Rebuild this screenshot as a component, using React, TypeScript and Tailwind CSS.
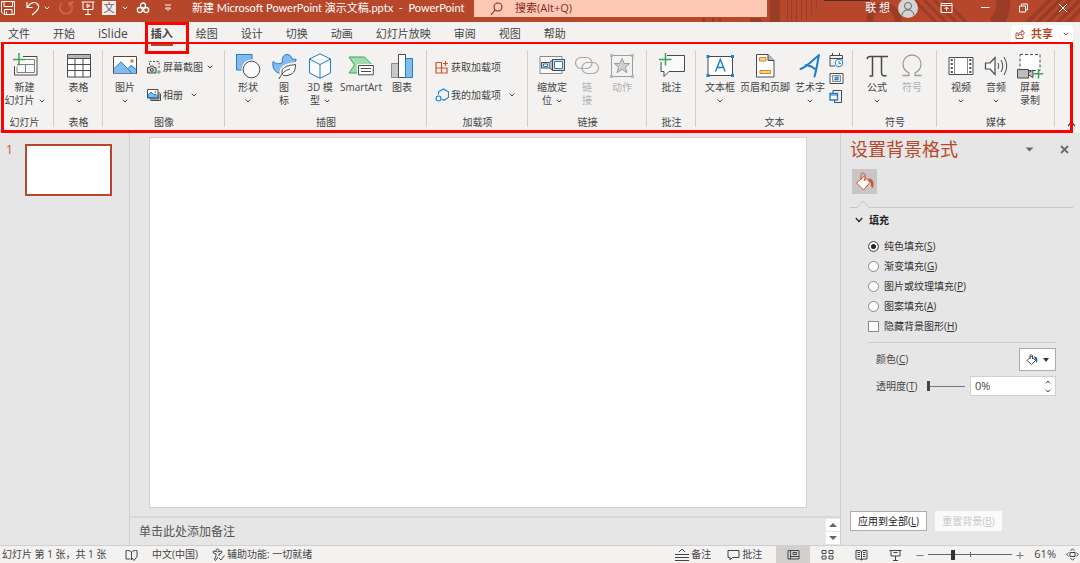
import type { ReactNode } from "react";

const INK = "#4a4a4a";
const BLUE = "#1e7fcb";
const SKY = "#83bbec";

type IconProps = { w: number; h: number; box?: string; children: ReactNode; className?: string };

function Icon({ w, h, box, children, className = "" }: IconProps) {
  return (
    <svg
      width={w}
      height={h}
      viewBox={box ?? `0 0 ${w} ${h}`}
      fill="none"
      stroke="currentColor"
      strokeWidth="1"
      aria-hidden="true"
      className={`shrink-0 ${className}`}
    >
      {children}
    </svg>
  );
}

function Chevron() {
  return (
    <Icon w={6} h={4}>
      <path d="M.8.7 3 3 5.2.7" />
    </Icon>
  );
}

const icons = {
  newSlide: (
    <Icon w={26} h={26}>
      <path d="M11 3.500h14v18.500h-22.500V13" fill="#fafafa" stroke={INK} />
      <path d="M11 6.500h11.500v13h-17.500v-6M5 11.500h17.500M13.500 11.500v8" stroke="#808080" />
      <path d="M7 0v12.500M1 6.500h12" stroke="#3aa655" strokeWidth="1.500" />
    </Icon>
  ),
  table: (
    <Icon w={26} h={26}>
      <path d="M1.500 1.500h23v22.500h-23z" fill="#fff" stroke={INK} />
      <path d="M2 2h22v3.500H2z" fill="#b5b5b5" stroke="none" />
      <path d="M1.500 5.500h23M1.500 11.500h23M1.500 17.500h23M9 5.500V24M17 5.500V24" stroke={INK} />
    </Icon>
  ),
  picture: (
    <Icon w={26} h={26}>
      <path d="M1.500 3.500h23v17h-23z" fill="#fff" stroke={INK} />
      <path d="M2 16l7-7 7 7 2-2.500 2-1.500 4 4v4.500H2z" fill={SKY} stroke="none" />
      <path d="M2 15.500 9 8.800l11 11.500M15.500 15.500l3.500-3 5.500 4.500" stroke={BLUE} />
      <circle cx="20" cy="8" r="1.800" fill="#e07b2a" stroke="none" />
    </Icon>
  ),
  shapes: (
    <Icon w={26} h={26}>
      <path d="M1.500 1.500h15.500v15.500h-15.500z" fill={SKY} stroke={BLUE} />
      <circle cx="16.500" cy="16.500" r="10" fill="#f3f2f1" stroke="none" />
      <circle cx="16.500" cy="16.500" r="8.300" fill="#fafafa" stroke={INK} />
    </Icon>
  ),
  duck: (
    <Icon w={26} h={26}>
      <path
        d="M2 8.500c3 2.500 6 2.800 9.500 1C10.500 5 12.500 1.500 16 1.500c2.700 0 4.300 1.700 5 4.300 1.500.7 3 .4 4.200.4-.4 3-2.700 4.300-5.200 4.300-1 6-3.500 11-10 10C4 20 1 15 2 8.500z"
        fill={SKY}
        stroke={BLUE}
      />
      <path d="M25 10.500c-7 1-14 2-15 8-.3 2.200.5 4 2 5 6 .8 13-2 13-13z" fill="#fff" stroke="#f3f2f1" strokeWidth="3" />
      <path d="M24.500 11.500c-7 1-13 2-13.500 7-.2 1.800.3 3 1.500 4 6 .8 12.500-2 12-11zM8 26c2.500-5.500 6-8.500 11-10" fill="#fff" stroke={INK} />
    </Icon>
  ),
  cube: (
    <Icon w={26} h={26}>
      <path d="M13 .8 23.500 6v14L13 25.300 2.500 20V6z" fill="#fafafa" stroke={BLUE} />
      <path d="M2.500 6 13 11.500 23.500 6M13 11.500v13.500" stroke={BLUE} />
    </Icon>
  ),
  smartArt: (
    <Icon w={26} h={26}>
      <path d="M1 4h15.500l6.500 6.500-9 9.500H1l5.500-8z" fill="#9fdcac" stroke="#3aa655" />
      <path d="M9 11h17v12H9z" fill="#f3f2f1" stroke="none" />
      <path d="M10.500 12.500h14.800v9.300H10.500z" fill="#fff" stroke={INK} />
      <path d="M13 15.500h10M13 18.500h10" stroke={INK} />
    </Icon>
  ),
  chart: (
    <Icon w={26} h={26}>
      <path d="M2.500 10.500h7v14h-7z" fill="#c8c8c8" stroke="#8a8a8a" />
      <path d="M9.500 1.500h7v23h-7z" fill="#fff" stroke={INK} />
      <path d="M16.500 5.500h7v19h-7z" fill={SKY} stroke={BLUE} />
    </Icon>
  ),
  zoomLink: (
    <Icon w={26} h={26}>
      <path d="M1 3.500h22v17H1z" fill="#fafafa" stroke="#8a8a8a" />
      <path d="M2.500 9.500h8v5.500h-8z" fill="#d8d8d8" stroke={INK} />
      <path d="M4.500 11h4v2.500h-4z" fill="#fff" stroke={BLUE} />
      <path d="M10.500 9.500 14 6.500v11L10.500 15" fill="#bbb" stroke={INK} />
      <path d="M13.500 6.500h12v11h-12z" fill="#d8d8d8" stroke={INK} />
      <path d="M15.500 8.500h8v7h-8z" fill="#fff" stroke={BLUE} />
    </Icon>
  ),
  link: (
    <Icon w={26} h={26} className="text-[#a8a8a8]">
      <rect x="1.500" y="4.500" width="16.500" height="11" rx="5.500" strokeWidth="1.200" />
      <rect x="8" y="9.500" width="16.500" height="11" rx="5.500" strokeWidth="1.200" />
    </Icon>
  ),
  action: (
    <Icon w={26} h={26} className="text-[#9c9c9c]">
      <path d="M2.500 2.500h21v21h-21z" />
      <path d="m13 5.500 2.200 5h5.500l-4.400 3.600 1.700 5.600-5-3.300-5 3.300 1.700-5.600-4.400-3.600h5.500z" fill="#d0d0d0" />
      <path d="M1 1h3v3H1zM22 1h3v3h-3zM1 22h3v3H1zM22 22h3v3h-3z" fill="#b8b8b8" stroke="none" />
    </Icon>
  ),
  comment: (
    <Icon w={26} h={26}>
      <path d="M8 2.500h17.500v16H10l-5 5v-5H2V9" fill="#fafafa" stroke={INK} />
      <path d="M6.500 0v12.500M0 6.500h12.500" stroke="#3aa655" strokeWidth="1.500" />
    </Icon>
  ),
  textBox: (
    <Icon w={28} h={26}>
      <path d="M2 3.500h24.500v19H2z" fill="#fff" stroke={INK} />
      <path d="m9.500 18.500 4.800-12 4.800 12M11 14.500h6.500" stroke={BLUE} strokeWidth="1.400" />
      <path d="M.5 2h3v3h-3zM25 2h3v3h-3zM.5 21h3v3h-3zM25 21h3v3h-3z" fill={BLUE} stroke="none" />
    </Icon>
  ),
  headerFooter: (
    <Icon w={26} h={26}>
      <path d="M4.500 1.500h11.500l6 6v16.500h-17.500z" fill="#fff" stroke={INK} />
      <path d="M16 1.500v6h6" fill="#bbb" stroke={INK} />
      <path d="M7.500 4.500h6.500v3.500H7.500zM8 17.500h10.500v3H8z" fill="#f9cf95" stroke="#dd8420" />
    </Icon>
  ),
  wordArt: (
    <Icon w={26} h={26}>
      <path d="M3.500 16C10 14 16 7 22 2 20.500 8 20 15.500 17.500 23.500M9 12c3.500.5 7 2 10 4.500" stroke={BLUE} strokeWidth="2" strokeLinecap="round" strokeLinejoin="round" />
    </Icon>
  ),
  pi: (
    <Icon w={26} h={26}>
      <path d="M3 6c.5-2 1.500-2.500 3-2.500h18M8.500 3.500V23H5.500M17.500 3.500v16c0 3 2 4 5 3" stroke={INK} strokeWidth="1.500" />
    </Icon>
  ),
  omega: (
    <Icon w={26} h={26} className="text-[#9c9c9c]">
      <path d="M3.500 22.500h6.500v-2.500C6 18 4 14.500 4 11a9 9 0 0 1 18 0c0 3.500-2 7-6 9v2.500h6.500" strokeWidth="1.300" />
    </Icon>
  ),
  video: (
    <Icon w={26} h={26}>
      <path d="M1 4.500h24v17H1z" fill="#fff" stroke={INK} />
      <path d="M6.500 4.500v17M19.500 4.500v17" stroke="#8a8a8a" />
      <path d="M3.800 6v15M22.300 6v15" stroke={INK} strokeWidth="2" strokeDasharray="2 2" />
    </Icon>
  ),
  audio: (
    <Icon w={26} h={26}>
      <path d="M2.500 10h4.500l5-5.500v17l-5-5.500H2.500z" fill="#fafafa" stroke={INK} strokeWidth="1.200" />
      <path d="M15 10q1.500 3 0 6M18 7q3.500 6 0 12M21 4q5.500 9 0 18" stroke={INK} />
    </Icon>
  ),
  screenRecord: (
    <Icon w={28} h={26}>
      <path d="M4 1.500h20v16H4z" fill="#fff" stroke={INK} strokeDasharray="3 2" />
      <path d="M1.500 16.500h11v8.500h-11zM12.500 19.500l4.500-2.500v7.500l-4.500-2.500z" fill="#bdbdbd" stroke={INK} />
      <path d="M22.500 16v9.500M17.800 20.700h9.500" stroke="#3aa655" strokeWidth="1.500" />
    </Icon>
  ),
};

type ToolProps = { icon: ReactNode; lines: string[]; width: string; menu?: boolean; off?: boolean };

function Tool({ icon, lines, width, menu, off }: ToolProps) {
  return (
    <button
      type="button"
      disabled={off}
      className={`flex shrink-0 flex-col items-center whitespace-nowrap leading-[13px] ${width} ${off ? "text-[#b0b0b0]" : ""}`}
    >
      <span className="mb-0.5 flex h-[26px] items-start">{icon}</span>
      <span>{lines[0]}</span>
      <span className="flex h-[13px] items-center justify-center gap-1">
        {lines[1]}
        {menu && <Chevron />}
      </span>
    </button>
  );
}

function RowTool({ icon, label, menu, wide }: { icon: ReactNode; label: string; menu?: boolean; wide?: boolean }) {
  return (
    <button type="button" className="flex h-7 items-center gap-0.5 whitespace-nowrap">
      {icon}
      <span className={wide ? "mr-1.5" : "mr-0.5"}>{label}</span>
      {menu && <Chevron />}
    </button>
  );
}

function Group({ label, className, children }: { label: string; className: string; children: ReactNode }) {
  return (
    <section
      aria-label={label}
      className={`relative flex shrink-0 flex-col justify-between after:absolute after:bottom-1.5 after:right-0 after:top-2 after:w-px after:bg-[#d2d0ce] ${className}`}
    >
      <div className="flex pt-[11px]">{children}</div>
      <h2 className="pb-1 text-center leading-[14px]">{label}</h2>
    </section>
  );
}

function Ribbon() {
  return (
    <div className="relative z-10 flex h-[91px] shrink-0 bg-[#f3f2f1] text-[10px] text-[#444]">
      <Group label="幻灯片" className="w-[54px] pr-[5px]">
        <Tool icon={icons.newSlide} lines={["新建", "幻灯片"]} width="w-full" menu />
      </Group>
      <Group label="表格" className="w-[49px]">
        <Tool icon={icons.table} lines={["表格"]} width="w-full" menu />
      </Group>
      <Group label="图像" className="w-[122px]">
        <Tool icon={icons.picture} lines={["图片"]} width="w-11" menu />
        <div className="flex flex-col">
          <RowTool
            label="屏幕截图"
            menu
            icon={
              <Icon w={14} h={14}>
                <path d="M2.500 5V1.500h9.500v8" stroke={INK} strokeDasharray="2 1.500" />
                <path d="M.5 7.500h2l1-1.500h2.500l1 1.500h2v5.500H.5z" fill="#ccc" stroke={INK} />
                <circle cx="4.800" cy="10" r="1.500" stroke={INK} />
                <path d="M12 10v4M10 12h4" stroke="#3aa655" />
              </Icon>
            }
          />
          <RowTool
            label="相册"
            menu
            wide
            icon={
              <Icon w={14} h={14}>
                <path d="M3.500 12.500h10v-7" stroke={INK} />
                <path d="M2.500 11h9.500V4" stroke={INK} />
                <path d="M.5 1.500h10.500v8.500H.5z" fill="#fff" stroke={INK} />
                <path d="M1 7l3-3 3 3 1.500-1L10.500 8v1.500H1z" fill={SKY} stroke={BLUE} />
                <circle cx="8.500" cy="3.800" r="1" fill="#e07b2a" stroke="none" />
              </Icon>
            }
          />
        </div>
      </Group>
      <Group label="插图" className="w-[202px] px-[5px]">
        <Tool icon={icons.shapes} lines={["形状"]} width="w-9" menu />
        <Tool icon={icons.duck} lines={["图", "标"]} width="w-9" />
        <Tool icon={icons.cube} lines={["3D 模", "型"]} width="w-9" menu />
        <Tool icon={icons.smartArt} lines={["SmartArt"]} width="w-[46px]" />
        <Tool icon={icons.chart} lines={["图表"]} width="w-9" />
      </Group>
      <Group label="加载项" className="w-[101px]">
        <div className="flex flex-col pl-2">
          <RowTool
            label="获取加载项"
            icon={
              <Icon w={14} h={14} className="text-[#d1502b]">
                <path d="M1 2.500h5.500v5.500M1 2.500V13h11V8H1M6.500 8v5" strokeWidth="1.200" />
                <path d="M10.500 1v5M8 3.500h5" strokeWidth="1.200" />
              </Icon>
            }
          />
          <RowTool
            label="我的加载项"
            menu
            wide
            icon={
              <Icon w={14} h={14} className="text-[#1e7fcb]">
                <path d="M3.500 6.500V3.800L8.500 1l5 2.800v5.700L9 12.300l-2-1" strokeWidth="1.100" />
                <circle cx="3.500" cy="10.500" r="2.500" strokeWidth="1.100" />
              </Icon>
            }
          />
        </div>
      </Group>
      <Group label="链接" className="w-[119px] px-[5px]">
        <Tool icon={icons.zoomLink} lines={["缩放定", "位"]} width="w-[38px]" menu />
        <Tool icon={icons.link} lines={["链", "接"]} width="w-8" off />
        <Tool icon={icons.action} lines={["动作"]} width="w-[38px]" off />
      </Group>
      <Group label="批注" className="w-[49px]">
        <Tool icon={icons.comment} lines={["批注"]} width="w-full" />
      </Group>
      <Group label="文本" className="w-[157px] px-[5px]">
        <Tool icon={icons.textBox} lines={["文本框"]} width="w-[38px]" menu />
        <Tool icon={icons.headerFooter} lines={["页眉和页脚"]} width="w-[52px]" />
        <Tool icon={icons.wordArt} lines={["艺术字"]} width="w-[38px]" menu />
        <div className="flex flex-col gap-[3px]">
          <button type="button" aria-label="日期和时间">
            <Icon w={15} h={15}>
              <path d="M1 2.500h12.500v4M1 2.500v10.500h5M1 5.500h12.500M3.500 0v3M10.500 0v3" stroke={INK} />
              <circle cx="10" cy="10" r="3.800" fill="#fff" stroke={BLUE} />
              <path d="M10 8v2.500h2" stroke={BLUE} />
            </Icon>
          </button>
          <button type="button" aria-label="幻灯片编号">
            <Icon w={15} h={15}>
              <path d="M1 2.500h13v10H1z" fill="#fff" stroke={INK} />
              <path d="M3.500 4.500h8v6h-8z" fill="#e3e3e3" stroke="#888" />
              <path d="M7 5.500 6.500 9.500M9 5.500l-.5 4M5.700 6.700h4M5.400 8.400h4" stroke={BLUE} />
            </Icon>
          </button>
          <button type="button" aria-label="对象">
            <Icon w={15} h={15}>
              <path d="M4 4V1.500h8.500v12H5.500v-2.500" stroke={INK} />
              <path d="M1 4.500h7.500v6.500H1z" fill="#fff" stroke={BLUE} strokeWidth="1.400" />
              <path d="M1 6h7.500" stroke={BLUE} />
            </Icon>
          </button>
        </div>
      </Group>
      <Group label="符号" className="w-[84px] px-1.5">
        <Tool icon={icons.pi} lines={["公式"]} width="w-9" menu />
        <Tool icon={icons.omega} lines={["符号"]} width="w-[34px]" off />
      </Group>
      <Group label="媒体" className="w-[118px] px-1.5">
        <Tool icon={icons.video} lines={["视频"]} width="w-9" menu />
        <Tool icon={icons.audio} lines={["音频"]} width="w-[34px]" menu />
        <Tool icon={icons.screenRecord} lines={["屏幕", "录制"]} width="w-[34px]" />
      </Group>
      <button type="button" aria-label="折叠功能区" className="ml-auto flex items-end pb-1.5 pr-1">
        <Icon w={9} h={6}>
          <path d="M1 5l3.500-4L8 5" stroke={INK} strokeWidth="1.200" />
        </Icon>
      </button>
      <div className="pointer-events-none absolute -top-px bottom-0 left-px right-[7px] border-[3px] border-[#fe0000]" />
    </div>
  );
}

function TitleBar() {
  return (
    <header className="relative flex h-[22px] shrink-0 items-start overflow-hidden bg-[#b7472a] text-[11px] text-white">
      <svg className="absolute right-0 top-0" width="560" height="22" viewBox="520 0 560 22" fill="none" stroke="#9a3d27" aria-hidden="true">
        <path d="M702 18h3v4h-3zM712 18h2v4h-2zM719 18h2v4h-2zM750 18h11v4h-11zM770 0h10v22h-10zM787 0h1v22h-1z" fill="#9a3d27" stroke="none" />
        <path d="M791.500 0v22M796.500 0v22M801.500 0v22M806.500 0v20M811.500 0v15M816.500 0v9" />
        <circle cx="884" cy="20" r="14" strokeWidth="7" />
        <path d="M914 0l22 22M924 0l22 22M934 0l22 22M944 0l22 22" strokeWidth="3" />
        <path d="M1003-2q2 14-8 26" strokeWidth="14" />
        <path d="M1026 24l26-26M1036 24l26-26M1046 24l26-26M1056 24l26-26M1066 24l26-26" strokeWidth="4" />
        <path d="M824 0h46v1h-46z" fill="#4a2b20" stroke="none" />
      </svg>
      <div className="relative flex h-4 shrink-0 items-center">
        <button type="button" aria-label="保存">
          <Icon w={16} h={16}>
            <path d="M1.500 1.500h13v13H4l-2.500-2.500zM4 1.500v5h8.500v-5M4.500 14.500v-5H12v5M6.500 14v-2.500" />
          </Icon>
        </button>
        <button type="button" aria-label="撤消" className="ml-2.5 flex items-center gap-1">
          <Icon w={14} h={16}>
            <path d="M1 2v5.500h5.500M1.500 7C5 2 9 1.500 11.500 4c3 3.500 0 6.500-5.500 11" strokeWidth="1.200" />
          </Icon>
          <Chevron />
        </button>
        <button type="button" aria-label="恢复" disabled className="ml-2 text-[#d9694a]">
          <Icon w={16} h={16}>
            <path d="M4.500 2.500a6.200 6.200 0 1 0 7 0M11.500 6.500v-4h4" strokeWidth="1.400" />
          </Icon>
        </button>
        <button type="button" aria-label="从头开始" className="ml-1.5">
          <Icon w={16} h={16}>
            <path d="M1.500 2h13M3 2v7.500h10V2M8 9.500v5M5 14.500h6M7 4v3.500l3-1.800z" />
          </Icon>
        </button>
        <button type="button" aria-label="翻译" className="ml-1.5 flex items-center gap-1.5">
          <span className="flex size-3.5 items-center justify-center bg-[#f7ebe8] text-[11px] leading-[14px] text-[#5a6470]">文</span>
          <Chevron />
        </button>
        <button type="button" aria-label="查找" className="ml-2">
          <Icon w={14} h={14}>
            <circle cx="7" cy="4.500" r="2.500" strokeWidth="1.300" />
            <circle cx="3.800" cy="9" r="2.500" strokeWidth="1.300" />
            <circle cx="10.200" cy="9" r="2.500" strokeWidth="1.300" />
          </Icon>
        </button>
        <button type="button" aria-label="自定义快速访问工具栏" className="ml-3.5">
          <Icon w={8} h={8}>
            <path d="M1 1h6M1.500 4h5L4 6.500z" />
          </Icon>
        </button>
      </div>
      <h1 className="relative ml-5 w-[282px] shrink-0 whitespace-nowrap font-['Lato','Noto_Sans_CJK_SC',sans-serif] leading-4">
        新建 Microsoft PowerPoint 演示文稿.pptx&nbsp; -&nbsp; PowerPoint
      </h1>
      <label className="relative flex h-[17px] w-[293px] items-center gap-3 bg-[#fdc9b5] pl-4 text-[#7f2a1e]">
        <Icon w={13} h={14}>
          <circle cx="8" cy="5" r="4" strokeWidth="1.100" />
          <path d="M5 8 1 13" strokeWidth="1.200" />
        </Icon>
        <input aria-label="搜索" placeholder="搜索(Alt+Q)" className="w-full min-w-0 bg-transparent outline-none placeholder:text-[#7f2a1e]" />
      </label>
      <div className="relative ml-auto flex h-4 shrink-0 items-center">
        <span className="mr-2">联 想</span>
        <span className="mr-[22px] flex size-5 items-center justify-center rounded-full bg-[#d4d4d4] text-[#666]">
          <Icon w={16} h={16}>
            <circle cx="8" cy="6" r="3.500" />
            <path d="M2 15.500c0-7.500 12-7.500 12 0" />
          </Icon>
        </span>
        <button type="button" aria-label="功能区显示选项" className="mr-[27px]">
          <Icon w={13} h={12}>
            <path d="M1 1.500h11v9H1zM1 3.500h11M6.500 9V5.500M4.500 7l2-2 2 2" />
          </Icon>
        </button>
        <button type="button" aria-label="最小化" className="mr-7">
          <Icon w={10} h={10}>
            <path d="M1 4.500h8.500" />
          </Icon>
        </button>
        <button type="button" aria-label="还原" className="mr-[29px]">
          <Icon w={11} h={10}>
            <path d="M1.500 3h6v6h-6zM3.500 3V1h6v6h-2" />
          </Icon>
        </button>
        <button type="button" aria-label="关闭" className="mr-3">
          <Icon w={10} h={10}>
            <path d="m1 1 8 8M9 1 1 9" />
          </Icon>
        </button>
      </div>
    </header>
  );
}

const tabs = ["文件", "开始", "iSlide", "插入", "绘图", "设计", "切换", "动画", "幻灯片放映", "审阅", "视图", "帮助"];

function TabRow() {
  return (
    <nav className="relative z-20 flex h-5 shrink-0 items-center gap-[23px] bg-[#f3f2f1] pl-2 pt-1 text-[11px] leading-4 text-[#444]">
      {tabs.map((tab) =>
        tab === "插入" ? (
          <button key={tab} type="button" className="relative whitespace-nowrap font-bold">
            {tab}
            <span className="absolute -bottom-1 left-0 h-0.5 w-full bg-[#b7472a]" />
            <span className="pointer-events-none absolute -left-1.5 -right-4 -top-1 h-8 border-[3px] border-[#fe0000]" />
          </button>
        ) : (
          <button key={tab} type="button" className={`whitespace-nowrap ${tab === "iSlide" ? "text-[12px]" : ""}`}>
            {tab}
          </button>
        ),
      )}
      <button type="button" className="ml-auto mr-[7px] flex h-[17px] items-center gap-1.5 self-end rounded-t-sm bg-white px-1 font-bold text-[#b7472a]">
        <Icon w={10} h={10}>
          <path d="M3 4H1v5.500h7V7M3 7c0-3 1.500-4 4-4V1l2.500 3L7 6.500V5C5 5 4 5.500 3 7z" />
        </Icon>
        <span className="mr-1">共享</span>
        <Chevron />
      </button>
    </nav>
  );
}

const fills: [string, string][] = [
  ["纯色填充", "S"],
  ["渐变填充", "G"],
  ["图片或纹理填充", "P"],
  ["图案填充", "A"],
];

function Key({ text, k }: { text: string; k: string }) {
  return (
    <span className="whitespace-nowrap">
      {text}(<u className="underline-offset-1">{k}</u>)
    </span>
  );
}

function FormatPane() {
  return (
    <aside className="flex w-60 shrink-0 flex-col border-l border-[#cfcfcf] pl-[9px] text-[10px] text-[#333]">
      <div className="flex h-8 items-center text-[#b7472a]">
        <h2 className="text-[18px] leading-6">设置背景格式</h2>
        <button type="button" aria-label="任务窗格选项" className="ml-auto mr-[26px] text-[#6b6b6b]">
          <Icon w={9} h={5}>
            <path d="M.5.5h8l-4 4z" fill="currentColor" stroke="none" />
          </Icon>
        </button>
        <button type="button" aria-label="关闭窗格" className="mr-[11px] text-[#6b6b6b]">
          <Icon w={9} h={9}>
            <path d="m1 1 7 7M8 1 1 8" strokeWidth="1.800" />
          </Icon>
        </button>
      </div>
      <button type="button" aria-label="填充选项卡" className="ml-0.5 mt-1 flex size-[25px] items-center justify-center bg-[#c6c6c6]">
        <Icon w={20} h={20}>
          <path d="M1.500 11 9 4.500l6 6-6.500 7.500z" fill="#fff" stroke="#d1502b" />
          <path d="M6 8V3c0-2.500 4-2.500 4 0v5" stroke="#d1502b" />
          <circle cx="9.500" cy="8" r="1" fill="#d1502b" stroke="none" />
          <path d="M12.500 6.500c5-.5 7 3 5.500 9.500-1.500-.5-2.500-2-2-5z" fill="#d1502b" stroke="none" />
        </Icon>
      </button>
      <div className="mr-[7px] mt-1.5 flex items-end text-[#c6c6c6]">
        <span className="h-px w-[7px] bg-[#c6c6c6]" />
        <Icon w={12} h={8}>
          <path d="M0 7.500 6 1l6 6.500" />
        </Icon>
        <span className="h-px flex-1 bg-[#c6c6c6]" />
      </div>
      <button type="button" className="mt-0.5 flex h-5 items-center gap-1.5 pl-[5px] font-bold text-[#222]">
        <Icon w={8} h={6}>
          <path d="m.8 1 3.200 3.500L7.200 1" strokeWidth="1.200" />
        </Icon>
        填充
      </button>
      <fieldset className="mt-1.5 pl-[18px]">
        {fills.map(([text, k], i) => (
          <label key={k} className="flex h-5 items-center gap-[5px]">
            <input
              type="radio"
              name="fill"
              defaultChecked={i === 0}
              className="size-[11px] appearance-none rounded-full border border-[#888] bg-white checked:border-[#666] checked:bg-[#222] checked:shadow-[inset_0_0_0_2px_#fff]"
            />
            <Key text={text} k={k} />
          </label>
        ))}
        <label className="flex h-5 items-center gap-[5px]">
          <input type="checkbox" className="size-[11px] appearance-none border border-[#888] bg-white checked:bg-[#444]" />
          <Key text="隐藏背景图形" k="H" />
        </label>
      </fieldset>
      <div className="ml-[18px] mr-6 mt-1.5 border-t border-[#cbcbcb] pl-2 pt-[5px] text-[#444]">
        <div className="flex h-[23px] items-center justify-between">
          <Key text="颜色" k="C" />
          <button type="button" aria-label="颜色" className="flex h-[23px] w-[37px] items-center justify-center gap-1 border border-[#ababab] bg-white">
            <Icon w={13} h={12}>
              <path d="M1 6.500 5.500 2l4 4.500L5.500 10.500zM4 5V1.500q1.500-1.500 2.500 0V5" stroke={INK} />
              <path d="M8 2.500c3 0 4 2 3 6-1 0-1.500-1-1.500-2.500z" fill="#1565b0" stroke="none" />
            </Icon>
            <Icon w={6} h={4}>
              <path d="M0 0h6L3 4z" fill="#333" stroke="none" />
            </Icon>
          </button>
        </div>
        <div className="mt-[5px] flex h-5 items-center">
          <label htmlFor="opacity" className="mr-2.5">
            <Key text="透明度" k="T" />
          </label>
          <input
            type="range"
            aria-label="透明度滑块"
            defaultValue={0}
            className="h-3 w-[38px] min-w-0 appearance-none bg-[linear-gradient(#777,#777)] bg-[length:100%_1px] bg-center bg-no-repeat [&::-webkit-slider-thumb]:h-2.5 [&::-webkit-slider-thumb]:w-[3px] [&::-webkit-slider-thumb]:appearance-none [&::-webkit-slider-thumb]:bg-[#444]"
          />
          <div className="ml-auto flex h-5 w-[86px] items-center border border-[#d0d0d0] bg-white pl-1 pr-1">
            <input id="opacity" defaultValue="0%" className="w-full min-w-0 bg-transparent text-[11px] outline-none" />
            <span className="flex flex-col gap-[5px]">
              <Icon w={6} h={4}>
                <path d="M1 3.300 3 1l2 2.300" />
              </Icon>
              <Icon w={6} h={4}>
                <path d="M1 .7 3 3 5 .7" />
              </Icon>
            </span>
          </div>
        </div>
      </div>
      <div className="mb-3.5 mt-auto flex gap-2">
        <button type="button" className="h-5 w-[77px] border border-[#ababab] bg-white text-[#222]">
          <Key text="应用到全部" k="L" />
        </button>
        <button type="button" disabled className="h-5 w-[67px] bg-[#fafafa] text-[#c8c8c8]">
          <Key text="重置背景" k="B" />
        </button>
      </div>
    </aside>
  );
}

function Workspace() {
  return (
    <div className="flex min-h-0 flex-1">
      <nav aria-label="幻灯片缩略图" className="flex w-[130px] shrink-0 items-start gap-3 border-r border-[#cfcfcf] pl-1.5 pt-[11px]">
        <span className="text-[12px] leading-3 text-[#d1502b]">1</span>
        <button type="button" aria-label="幻灯片 1" className="h-[52px] w-[87px] border-2 border-[#b7472a] bg-white" />
      </nav>
      <main className="flex min-w-0 flex-1 flex-col">
        <div className="flex flex-1 pb-2 pl-[19px] pr-[33px] pt-1">
          <div className="flex-1 border border-[#d0d0d0] bg-white" />
        </div>
        <div className="flex h-[29px] shrink-0 items-center border-t-2 border-[#d8d8d8] pl-[9px]">
          <p className="flex-1 text-[12px] leading-4 text-[#555]">单击此处添加备注</p>
          <div className="flex flex-col gap-px text-[#666]">
            <button type="button" aria-label="向上滚动" className="flex h-3 w-3.5 items-center justify-center bg-white">
              <Icon w={8} h={4}>
                <path d="M0 4h8L4 0z" fill="currentColor" stroke="none" />
              </Icon>
            </button>
            <button type="button" aria-label="向下滚动" className="flex h-3 w-3.5 items-center justify-center bg-white">
              <Icon w={8} h={4}>
                <path d="M0 0h8L4 4z" fill="currentColor" stroke="none" />
              </Icon>
            </button>
          </div>
        </div>
      </main>
      <FormatPane />
    </div>
  );
}

function StatusBar() {
  return (
    <footer className="flex h-[18px] shrink-0 items-center border-t border-[#cfcfcf] bg-[#f3f2f1] pl-0.5 text-[10px] text-[#444]">
      <span className="w-[123px] whitespace-nowrap">幻灯片 第 1 张，共 1 张</span>
      <button type="button" aria-label="拼写检查" className="w-[27px]">
        <Icon w={14} h={12}>
          <path d="M6.500 3v8M6.500 3C5 1.500 3 1.500 1 1.500V10h4.500M6.500 3C8 1.500 10 1.500 12 1.500V7M7 9l2 2.500 3.500-4.500" />
        </Icon>
      </button>
      <span className="w-[60px]">中文(中国)</span>
      <Icon w={13} h={13} className="mr-0.5">
        <circle cx="5.500" cy="2.500" r="1.500" />
        <path d="M4 3.500 1.500 3q-1 1 0 2L4 6v2l-1.500 3.500q.5 1.500 1.500.5l2-3M7 3.500 9.500 3q1 1 0 2L7 6v2M7 10l2 2 3.500-4.500" />
      </Icon>
      <span className="whitespace-nowrap">辅助功能: 一切就绪</span>
      <div className="ml-auto flex h-full items-center">
        <button type="button" className="mr-4 flex items-center gap-0.5">
          <Icon w={14} h={13}>
            <path d="M0 6.500h14M0 9.500h14M0 12.500h14M4 4l3-3 3 3" />
          </Icon>
          备注
        </button>
        <button type="button" className="mr-3.5 flex items-center gap-0.5">
          <Icon w={13} h={12}>
            <path d="M1 1.500h11v7H5.500L3 11V8.500H1z" />
          </Icon>
          批注
        </button>
        <button type="button" aria-label="普通视图" className="flex h-full w-[34px] items-center justify-center bg-[#d2d0ce]">
          <Icon w={13} h={11}>
            <path d="M1 1.500h11v8.500H1zM3.500 1.500V10M3.500 7.500H12M6 3.500h3.500v2H6z" />
          </Icon>
        </button>
        <button type="button" aria-label="幻灯片浏览" className="flex w-[34px] justify-center">
          <Icon w={13} h={11}>
            <path d="M1 1.500h4v3H1zM8 1.500h4v3H8zM1 7h4v3H1zM8 7h4v3H8z" />
          </Icon>
        </button>
        <button type="button" aria-label="阅读视图" className="flex w-[34px] justify-center">
          <Icon w={13} h={12}>
            <path d="M6.500 2.500v8.500M6.500 2.500 5 1.500H1V10h4l1.500 1L8 10h4V1.500H8zM2.500 3.500H5M2.500 5.500H5M2.500 7.500H5M8 3.500h2.500M8 5.500h2.500M8 7.500h2.500" />
          </Icon>
        </button>
        <button type="button" aria-label="幻灯片放映" className="mr-1 flex w-[34px] justify-center">
          <Icon w={13} h={12}>
            <path d="M.5 1.500h12M2 1.500V7h9V1.500M6.500 7v4M4 11.500h5M4.500 3.500h4" />
          </Icon>
        </button>
        <button type="button" aria-label="缩小" className="mr-1 text-[#777]">
          <Icon w={8} h={8}>
            <path d="M.5 4.500h7" />
          </Icon>
        </button>
        <input
          type="range"
          aria-label="缩放"
          min={0}
          max={100}
          defaultValue={28}
          className="mr-1 h-3 w-[84px] min-w-0 appearance-none bg-[linear-gradient(#666,#666),linear-gradient(#666,#666)] bg-[length:100%_1px,1px_5px] bg-center bg-no-repeat [&::-webkit-slider-thumb]:h-2.5 [&::-webkit-slider-thumb]:w-1 [&::-webkit-slider-thumb]:appearance-none [&::-webkit-slider-thumb]:bg-[#333]"
        />
        <button type="button" aria-label="放大" className="mr-2.5 text-[#777]">
          <Icon w={8} h={8}>
            <path d="M.5 4.500h7M4 1v7" />
          </Icon>
        </button>
        <span className="mr-2.5 text-[11px]">61%</span>
        <button type="button" aria-label="使幻灯片适应当前窗口" className="mr-px">
          <Icon w={13} h={13}>
            <path d="M4 4.500h5v4H4zM4.500 2.800l2-2 2 2M4.500 10.200l2 2 2-2M2.800 4.500l-2 2 2 2M10.200 4.500l2 2-2 2" />
          </Icon>
        </button>
      </div>
    </footer>
  );
}

export default function App() {
  return (
    <div lang="zh-CN" className="flex h-screen flex-col overflow-hidden bg-[#e6e6e6] font-['Open_Sans','Noto_Sans_CJK_SC',sans-serif]">
      <TitleBar />
      <TabRow />
      <Ribbon />
      <Workspace />
      <StatusBar />
    </div>
  );
}
